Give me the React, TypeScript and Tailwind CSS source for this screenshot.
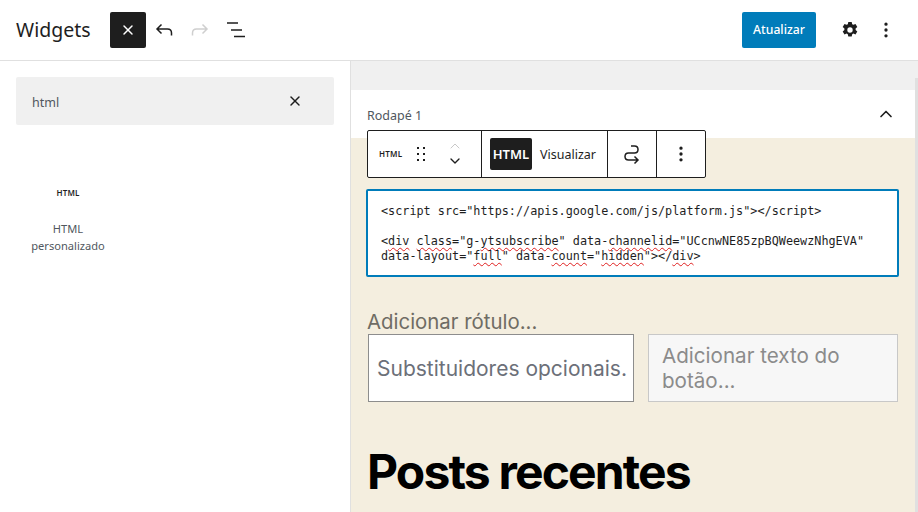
import { ChevronDown, ChevronUp, MoreVertical, X } from "lucide-react";

const ui = "font-['Noto_Sans','Open_Sans',sans-serif]";

function Squiggle({ children }: { children: string }) {
  return <span className="underline decoration-wavy decoration-[#e02020] decoration-1 underline-offset-2">{children}</span>;
}

function HtmlGlyph({ className = "" }: { className?: string }) {
  return <span className={`text-[8px] font-semibold leading-none tracking-[0.2px] text-[#1e1e1e] ${className}`}>HTML</span>;
}

function Header() {
  return (
    <header className="flex h-[61px] shrink-0 items-center border-b border-[#e0e0e0] bg-white pl-[16px] pr-[14px]">
      <h1 className="w-[94px] text-[19.500px] font-normal leading-none text-[#1e1e1e]">Widgets</h1>
      <button className="flex h-9 w-9 items-center justify-center rounded-[2px] bg-[#1e1e1e] text-white">
        <X size={16} strokeWidth={2.2} />
      </button>
      <button className="flex h-9 w-9 items-center justify-center">
        <svg width="24" height="24" viewBox="0 0 24 24" fill="none" stroke="#1e1e1e" strokeWidth="1.5">
          <path d="M19.500 17.500V15c0-2.400-1.600-4-4-4H5M9.500 6.500 5 11l4.500 4.500" />
        </svg>
      </button>
      <button className="flex h-9 w-9 items-center justify-center">
        <svg width="24" height="24" viewBox="0 0 24 24" fill="none" stroke="#cfcfcf" strokeWidth="1.5">
          <path d="M4.500 17.500V15c0-2.400 1.600-4 4-4H19M14.500 6.500 19 11l-4.500 4.500" />
        </svg>
      </button>
      <button className="flex h-9 w-9 items-center justify-center">
        <svg width="24" height="24" viewBox="0 0 24 24" fill="#1e1e1e">
          <path d="M3 4.300h11v1.500H3zM7 11.300h11v1.500H7zM10 17.800h11v1.500H10z" />
        </svg>
      </button>
      <div className="ml-auto flex items-center">
        <button className="h-9 w-[74px] rounded-[2px] bg-[#007cba] text-[12.200px] font-medium text-white">Atualizar</button>
        <button className="ml-[16px] flex h-9 w-9 items-center justify-center">
          <svg width="24" height="24" viewBox="0 0 24 24" fill="#1e1e1e">
            <path
              fillRule="evenodd"
              d="M10.300 4h3.400l.5 2.200 1.200.6 2.100-.8 1.800 3-1.700 1.500v1.400l1.700 1.500-1.800 3-2.100-.8-1.200.6-.5 2.300h-3.400l-.5-2.300-1.200-.6-2.100.8-1.800-3 1.700-1.500v-1.400L4.700 9l1.800-3 2.100.8 1.200-.6.5-2.200ZM12 9.300a2.700 2.700 0 1 0 0 5.400 2.700 2.700 0 0 0 0-5.400Z"
            />
          </svg>
        </button>
        <button className="flex h-9 w-[36px] items-center justify-center text-[#1e1e1e]">
          <MoreVertical size={20} strokeWidth={2} />
        </button>
      </div>
    </header>
  );
}

function Inserter() {
  return (
    <aside className="w-[351px] shrink-0 border-r border-[#e0e0e0] bg-white px-4 pt-4">
      <div className="flex h-12 items-center justify-between rounded-[2px] bg-[#f0f0f0] pl-4 pr-[31px] pt-[5px] text-[12.500px] text-[#50575e]">
        <span>html</span>
        <X size={16} strokeWidth={2.2} className="-mt-[5px] text-[#1e1e1e]" />
      </div>
      <div className="mt-[64px] flex w-[104px] flex-col items-center">
        <HtmlGlyph />
        <p className="mt-[23px] text-center text-[11.100px] leading-[17px] text-[#50575e]">
          HTML
          <br />
          personalizado
        </p>
      </div>
    </aside>
  );
}

function BlockToolbar() {
  return (
    <div className="-mt-2 flex h-12 w-[339px] shrink-0 rounded-[2px] border border-[#1e1e1e] bg-white text-[#1e1e1e]">
      <div className="flex w-[114px] items-center border-r border-[#1e1e1e] pl-[11px]">
        <HtmlGlyph />
        <svg className="ml-[13px]" width="12" height="18" viewBox="0 0 12 18" fill="#1e1e1e">
          <path d="M2 2h2v2H2zM8 2h2v2H8zM2 8h2v2H2zM8 8h2v2H8zM2 14h2v2H2zM8 14h2v2H8z" />
        </svg>
        <div className="ml-[20px] flex flex-col items-center">
          <ChevronUp size={16} strokeWidth={1.5} className="-mb-[1px] -mt-[1px] text-[#c8c8c8]" />
          <ChevronDown size={16} strokeWidth={2} />
        </div>
      </div>
      <div className="flex w-[126px] items-center border-r border-[#1e1e1e] pl-[8px]">
        <span className="flex h-8 w-[42px] items-center justify-center rounded-[2px] bg-[#1e1e1e] pt-[1px] text-[13px] font-semibold text-white">HTML</span>
        <span className="ml-[8px] pt-[2px] text-[12.500px] font-normal">Visualizar</span>
      </div>
      <div className="flex w-[49px] items-center justify-center border-r border-[#1e1e1e]">
        <svg width="24" height="24" viewBox="0 0 24 24" fill="none" stroke="#1e1e1e" strokeWidth="1.5">
          <path d="M11 4h3.500c2 0 3.500 1.500 3.500 3.500S16.500 11 14.500 11h-6C6.500 11 5 12.500 5 14.500S6.500 18 8.500 18H18M14.500 14.500 18 18l-3.500 3.500" />
        </svg>
      </div>
      <div className="flex flex-1 items-center justify-center">
        <MoreVertical size={20} strokeWidth={2} />
      </div>
    </div>
  );
}

function CodeEditor() {
  return (
    <div className="-ml-[1px] mt-[11px] h-[88px] w-[533px] shrink-0 rounded-[2px] border-2 border-[#007cba] bg-white pl-[13px] pt-[13px] font-['DejaVu_Sans_Mono',monospace] text-[11.810px] leading-[15px] text-[#1e1e1e]">
      <div>{'<script src="https://apis.google.com/js/platform.js"></script>'}</div>
      <div className="mt-[15px]">
        {"<"}
        <Squiggle>div</Squiggle> <Squiggle>class</Squiggle>="g-<Squiggle>ytsubscribe</Squiggle>" data-<Squiggle>channelid</Squiggle>="UCcnwNE85zpBQWeewzNhgEVA"
      </div>
      <div>
        data-layout="<Squiggle>full</Squiggle>" data-<Squiggle>count</Squiggle>="<Squiggle>hidden</Squiggle>"&gt;&lt;/<Squiggle>div</Squiggle>&gt;
      </div>
    </div>
  );
}

function WidgetArea() {
  return (
    <section className="mt-[29px] w-[564px] bg-white">
      <div className="flex h-12 items-center justify-between pl-4 pr-[19px]">
        <span className="pt-[4px] text-[12.500px] font-normal text-[#50575e]">Rodapé 1</span>
        <ChevronUp size={20} strokeWidth={2} className="text-[#1e1e1e]" />
      </div>
      <div className="flex h-[400px] flex-col bg-[#f4eedf] pl-4">
        <BlockToolbar />
        <CodeEditor />
        <p className="mt-[33px] font-['Inter',sans-serif] text-[20.400px] leading-[24px] text-[#6f6c64]">Adicionar rótulo...</p>
        <div className="ml-[1px] flex font-['Inter',sans-serif]">
          <div className="flex h-[68px] w-[266px] items-center border border-[#8d8d8d] bg-white pl-[8px] pt-[1px] text-[21px] whitespace-nowrap text-[#6c7079]">
            Substituidores opcionais.
          </div>
          <div className="ml-[14px] h-[68px] w-[250px] border border-[#c8c8c8] bg-[#f7f7f7] pl-[13px] pt-[8px] text-[20.600px] leading-[25px] text-[#8b8b8b]">
            Adicionar texto do botão...
          </div>
        </div>
        <h2 className="mt-[38px] font-['Inter',sans-serif] text-[48px] font-bold leading-[64px] tracking-[-1.850px] text-black">Posts recentes</h2>
      </div>
    </section>
  );
}

export default function App() {
  return (
    <div className={`flex h-[512px] w-[918px] flex-col overflow-hidden bg-white ${ui}`}>
      <Header />
      <div className="flex min-h-0 flex-1">
        <Inserter />
        <main className="flex min-w-0 flex-1 bg-[#f0f0f0]">
          <WidgetArea />
          <div className="ml-auto mt-[17px] w-[3px] bg-[#e0e0e0]" />
        </main>
      </div>
    </div>
  );
}
